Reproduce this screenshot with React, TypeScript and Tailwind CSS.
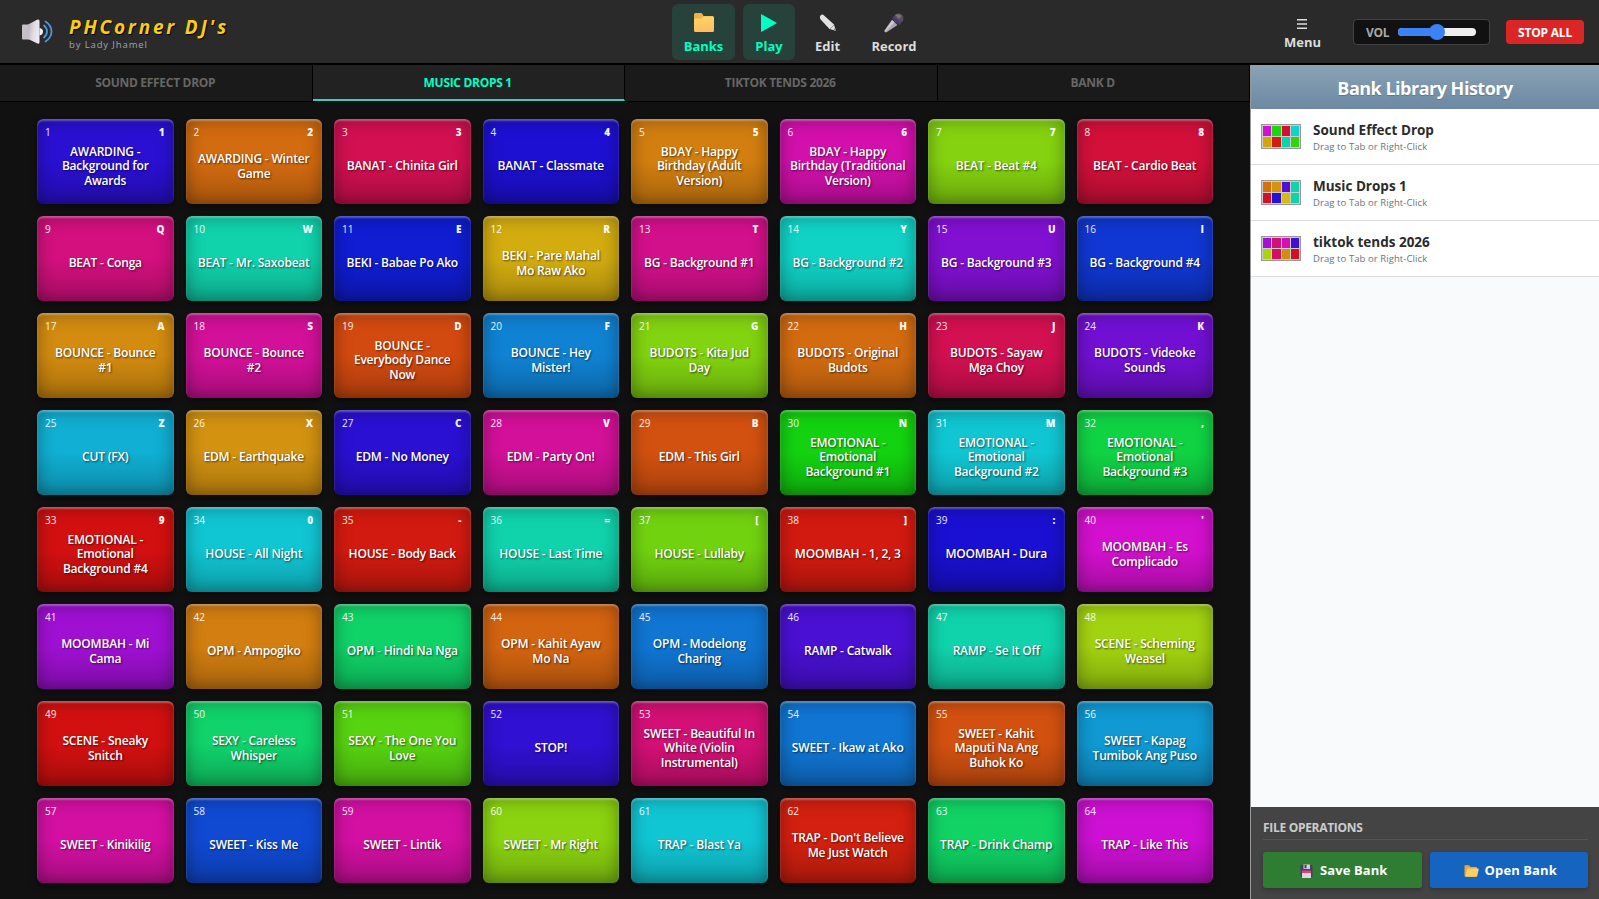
import React from "react";

type Pad = [label: string, key: string, hue: number];

const pads: Pad[] = [
  ["AWARDING -\nBackground for\nAwards", "1", 248],
  ["AWARDING - Winter\nGame", "2", 28],
  ["BANAT - Chinita Girl", "3", 340],
  ["BANAT - Classmate", "4", 244],
  ["BDAY - Happy\nBirthday (Adult\nVersion)", "5", 34],
  ["BDAY - Happy\nBirthday (Traditional\nVersion)", "6", 312],
  ["BEAT - Beat #4", "7", 84],
  ["BEAT - Cardio Beat", "8", 347],
  ["BEAT - Conga", "Q", 326],
  ["BEAT - Mr. Saxobeat", "W", 168],
  ["BEKI - Babae Po Ako", "E", 236],
  ["BEKI - Pare Mahal\nMo Raw Ako", "R", 48],
  ["BG - Background #1", "T", 322],
  ["BG - Background #2", "Y", 176],
  ["BG - Background #3", "U", 275],
  ["BG - Background #4", "I", 228],
  ["BOUNCE - Bounce\n#1", "A", 38],
  ["BOUNCE - Bounce\n#2", "S", 318],
  ["BOUNCE -\nEverybody Dance\nNow", "D", 18],
  ["BOUNCE - Hey\nMister!", "F", 205],
  ["BUDOTS - Kita Jud\nDay", "G", 85],
  ["BUDOTS - Original\nBudots", "H", 28],
  ["BUDOTS - Sayaw\nMga Choy", "J", 340],
  ["BUDOTS - Videoke\nSounds", "K", 270],
  ["CUT (FX)", "Z", 191],
  ["EDM - Earthquake", "X", 40],
  ["EDM - No Money", "C", 248],
  ["EDM - Party On!", "V", 318],
  ["EDM - This Girl", "B", 20],
  ["EMOTIONAL -\nEmotional\nBackground #1", "N", 119],
  ["EMOTIONAL -\nEmotional\nBackground #2", "M", 184],
  ["EMOTIONAL -\nEmotional\nBackground #3", ",", 136],
  ["EMOTIONAL -\nEmotional\nBackground #4", "9", 0],
  ["HOUSE - All Night", "0", 184],
  ["HOUSE - Body Back", "-", 3],
  ["HOUSE - Last Time", "=", 168],
  ["HOUSE - Lullaby", "[", 90],
  ["MOOMBAH - 1, 2, 3", "]", 3],
  ["MOOMBAH - Dura", ":", 243],
  ["MOOMBAH - Es\nComplicado", "'", 302],
  ["MOOMBAH - Mi\nCama", "", 284],
  ["OPM - Ampogiko", "", 34],
  ["OPM - Hindi Na Nga", "", 147],
  ["OPM - Kahit Ayaw\nMo Na", "", 26],
  ["OPM - Modelong\nCharing", "", 209],
  ["RAMP - Catwalk", "", 258],
  ["RAMP - Se It Off", "", 168],
  ["SCENE - Scheming\nWeasel", "", 75],
  ["SCENE - Sneaky\nSnitch", "", 0],
  ["SEXY - Careless\nWhisper", "", 148],
  ["SEXY - The One You\nLove", "", 98],
  ["STOP!", "", 250],
  ["SWEET - Beautiful In\nWhite (Violin\nInstrumental)", "", 329],
  ["SWEET - Ikaw at Ako", "", 209],
  ["SWEET - Kahit\nMaputi Na Ang\nBuhok Ko", "", 20],
  ["SWEET - Kapag\nTumibok Ang Puso", "", 198],
  ["SWEET - Kinikilig", "", 315],
  ["SWEET - Kiss Me", "", 222],
  ["SWEET - Lintik", "", 315],
  ["SWEET - Mr Right", "", 82],
  ["TRAP - Blast Ya", "", 184],
  ["TRAP - Don't Believe\nMe Just Watch", "", 5],
  ["TRAP - Drink Champ", "", 146],
  ["TRAP - Like This", "", 298],
];

const library = [
  { name: "Sound Effect Drop", hues: [299, 115, 350, 178, 46, 4, 168, 110] },
  { name: "Music Drops 1", hues: [30, 41, 260, 167, 352, 248, 53, 167] },
  { name: "tiktok tends 2026", hues: [286, 328, 310, 255, 72, 335, 38, 354] },
];

const tabs = ["SOUND EFFECT DROP", "MUSIC DROPS 1", "TIKTOK TENDS 2026", "BANK D"];

const tone = (h: number) => ({ backgroundColor: `hsl(${h}, 86%, 44.5%)` });

function Speaker() {
  return (
    <svg width="32" height="28" viewBox="0 0 32 28">
      <defs>
        <linearGradient id="cone" x1="0" y1="0" x2="1" y2="0.3">
          <stop offset="0" stopColor="#b5b0b8" />
          <stop offset="0.6" stopColor="#e2dce5" />
          <stop offset="1" stopColor="#efe8f2" />
        </linearGradient>
      </defs>
      <path d="M1 7.5 Q1 6.5 2 6.5 H8 V21.500 H2 Q1 21.500 1 20.500Z" fill="#c4c0c6" />
      <path d="M7 6.500 L16.500 1.500 Q18.500 1 18.500 3 V24 Q18.500 26.500 16.500 25.500 L7 21Z" fill="url(#cone)" />
      <path d="M18.500 10 Q22 10.500 22 13.500 Q22 17 18.500 17.500Z" fill="#f3edf5" />
      <g fill="none" stroke="#4d94dc" strokeLinecap="round" strokeWidth="1.800">
        <path d="M23 7.500 Q26 10 26 13.500 Q26 17 23 19.500" />
        <path d="M24.500 3.500 Q30.500 7.500 30.500 13.500 Q30.500 19.500 24.500 23.500" />
      </g>
    </svg>
  );
}

function Folder() {
  return (
    <svg width="20" height="19" viewBox="0 0 20 19">
      <defs>
        <linearGradient id="fold" x1="0" y1="0" x2="0" y2="1">
          <stop offset="0" stopColor="#ffd46b" />
          <stop offset="1" stopColor="#ffbc5c" />
        </linearGradient>
      </defs>
      <path d="M0 1.500 Q0 0 1.500 0 H7 Q8 0 8.500 1 L9.500 3 H18.500 Q20 3 20 4.500 V9 H0Z" fill="#efb045" />
      <path d="M0 7 Q0 5.500 1.500 5.500 H7.500 L9.500 3.500 H18.500 Q20 3.500 20 5 V17.500 Q20 19 18.500 19 H1.500 Q0 19 0 17.500Z" fill="url(#fold)" />
    </svg>
  );
}

function Pencil() {
  return (
    <svg width="18" height="18" viewBox="0 0 18 18">
      <path d="M1 3.500 Q0.500 2 2 1 Q3.500 0 4.800 1.200 L15 10.500 L16.800 16.800 L10.500 15 L1.200 5Z" fill="#e0e2e3" />
      <path d="M11 15 L15 11" stroke="#8d9093" strokeWidth="0.800" />
      <path d="M16.800 16.800 L14.200 16 L16 14Z" fill="#a98763" />
    </svg>
  );
}

function Mic() {
  return (
    <svg width="20" height="20" viewBox="0 0 20 20">
      <path d="M8 7 L13.500 12 L3 19 Q1.500 19.800 0.800 19 Q0 18.300 0.700 17Z" fill="#aaa5ad" />
      <path d="M8 7 L10.500 9.300 L1.800 18.800 L0.600 18.200Z" fill="#cbc7ce" />
      <circle cx="14.500" cy="5.500" r="5" fill="#574b5e" />
      <path d="M11 2 Q15 0 18 3 L15 6Z" fill="#80716f" />
      <path d="M9.500 5 L15.500 10.500" stroke="#443a75" strokeWidth="2.600" strokeLinecap="round" />
    </svg>
  );
}

function Floppy() {
  return (
    <svg width="13" height="14" viewBox="0 0 13 14">
      <path d="M0.500 1 H12.500 V13 H1.500 L0.500 12Z" fill="#493b70" />
      <rect x="3.500" y="0.500" width="6.500" height="4.500" fill="#d5cedb" />
      <rect x="4.500" y="1" width="2" height="3.300" fill="#493b70" />
      <rect x="2" y="6.500" width="9" height="2.700" fill="#e3436f" />
      <rect x="2" y="9" width="9" height="5" fill="#ddd6e2" />
    </svg>
  );
}

function OpenFolder() {
  return (
    <svg width="15" height="12" viewBox="0 0 15 12">
      <path d="M0.500 1 Q0.500 0.300 1.300 0.300 H5 L6.500 2 H12 Q13 2 13 3 V11.500 H1.500 Q0.500 11.500 0.500 10.500Z" fill="#eda940" />
      <path d="M4 3.600 H14 Q15 3.600 14.700 4.600 L13.200 11 Q13 11.700 12.200 11.700 H1.300 L3 4.400 Q3.200 3.600 4 3.600Z" fill="#ffcf62" />
    </svg>
  );
}

function NavButton({ label, active, className, children }: { label: string; active?: boolean; className: string; children: React.ReactNode }) {
  return (
    <button
      className={`flex h-[56px] flex-col items-center rounded-[6px] pt-[9px] text-[13px] leading-[18px] font-bold ${className} ${
        active ? "bg-[#26423b] text-[#00ffc3]" : "text-[#dddddd]"
      }`}
    >
      <span className="flex h-[20px] items-center justify-center">{children}</span>
      <span className="mt-[4px]">{label}</span>
    </button>
  );
}

function PadButton({ pad, index }: { pad: Pad; index: number }) {
  const [label, key, hue] = pad;
  return (
    <button
      style={tone(hue)}
      className="relative flex items-center justify-center rounded-[6px] bg-[linear-gradient(to_bottom,rgba(0,0,0,0)_50%,rgba(0,0,0,0.2))] pt-[10px] text-white shadow-[inset_0_2px_2px_rgba(255,255,255,0.3),inset_0_0_18px_rgba(0,0,0,0.38),0_4px_6px_rgba(0,0,0,0.4)]"
    >
      <span className="absolute top-[6px] left-[8px] text-[10px] leading-[14px] text-white/90">{index + 1}</span>
      <span className="absolute top-[6px] right-[9px] text-[10px] leading-[14px] font-extrabold text-white/95">{key}</span>
      <span className="text-center text-[12px] leading-[14.4px] font-semibold tracking-[-0.2px] whitespace-pre [text-shadow:1px_1px_2px_rgba(0,0,0,0.6)]">
        {label}
      </span>
    </button>
  );
}

export default function App() {
  return (
    <div className="flex h-[899px] w-[1599px] flex-col overflow-hidden bg-[#111111] font-['Open_Sans','Noto_Sans',sans-serif]">
      <header className="flex h-[65px] shrink-0 items-center border-b-2 border-black bg-[#2a2a2a]">
        <div className="flex w-[672px] items-center pl-[21px]">
          <Speaker />
          <div className="flex flex-col pt-[4px] pl-[16px]">
            <span className="text-[19px] leading-[22px] font-bold tracking-[2.8px] text-[#facc15] italic [text-shadow:1px_1px_1px_#000]">
              PHCorner DJ's
            </span>
            <span className="text-[9.500px] leading-[14px] tracking-[0.88px] text-[#a0a6ae]">by Lady Jhamel</span>
          </div>
        </div>
        <nav className="flex gap-[8px]">
          <NavButton label="Banks" active className="w-[63px]"><Folder /></NavButton>
          <NavButton label="Play" active className="w-[52px]">
            <svg width="16" height="18" viewBox="0 0 16 18"><path d="M0 0 L16 9 L0 18Z" fill="#00ffc3" /></svg>
          </NavButton>
          <NavButton label="Edit" className="w-[49px]"><Pencil /></NavButton>
          <NavButton label="Record" className="w-[68px]"><Mic /></NavButton>
        </nav>
        <div className="ml-auto flex items-center pr-[15px]">
          <button className="flex flex-col items-center pt-[6px] text-[13px] leading-[18px] font-bold text-[#dddddd]">
            <svg width="10" height="10" viewBox="0 0 10 10" className="mb-[4px]">
              <path d="M0 0.800 H10 M0 5 H10 M0 9.200 H10" stroke="#dddddd" strokeWidth="1.400" />
            </svg>
            Menu
          </button>
          <div className="ml-[32px] flex h-[26px] w-[137px] items-center rounded-[4px] border border-[#444444] bg-[#111111] pl-[12px]">
            <span className="w-[32px] pt-[2px] text-[12px] font-bold tracking-[-0.3px] text-[#aaaaaa]">VOL</span>
            <div className="flex h-[8px] w-[78px] items-center rounded-full bg-[#efefef]">
              <div className="h-[8px] w-[33px] rounded-l-full bg-[#3b82f6]" />
              <div className="-ml-[2px] size-[16px] rounded-full bg-[#3b82f6]" />
            </div>
          </div>
          <button className="ml-[16px] h-[24px] w-[78px] rounded-[4px] bg-[#dc2626] text-[12px] leading-[26px] font-bold tracking-[-0.2px] text-white">
            STOP ALL
          </button>
        </div>
      </header>

      <div className="flex min-h-0 flex-1">
        <main className="flex w-[1250px] shrink-0 flex-col">
          <div className="grid h-[37px] shrink-0 grid-cols-4 border-b border-black bg-[#1a1a1a]">
            {tabs.map((tab, i) => (
              <button
                key={tab}
                className={`h-[36px] border-r border-b-2 border-r-black pt-px pr-px text-[12px] leading-[34px] font-bold tracking-[-0.3px] ${
                  i === 1 ? "border-b-[#2dd4bf] bg-[#222222] text-[#00ffc3]" : "border-b-transparent text-[#666666]"
                }`}
              >
                {tab}
              </button>
            ))}
          </div>
          <div className="grid flex-1 grid-cols-8 grid-rows-8 gap-[12px] pt-[17px] pr-[37px] pb-[16px] pl-[37px]">
            {pads.map((pad, i) => (
              <PadButton key={i} pad={pad} index={i} />
            ))}
          </div>
        </main>

        <aside className="flex flex-1 flex-col border-l border-[#999999] bg-[#f9fafb]">
          <h2 className="flex h-[44px] shrink-0 items-center justify-center bg-linear-to-b from-[#8aa4b4] to-[#6c88a3] pt-[2px] text-[18px] font-bold tracking-[-0.5px] text-white [text-shadow:0_1px_1px_rgba(0,0,0,0.2)]">
            Bank Library History
          </h2>
          <ul>
            {library.map((bank) => (
              <li key={bank.name} className="flex h-[56px] items-center border-b border-[#dddddd] bg-white pl-[10px]">
                <div className="grid h-[25px] w-[40px] grid-cols-4 grid-rows-2 gap-px border border-[#999999] bg-[#cccccc] p-px">
                  {bank.hues.map((h, i) => (
                    <span key={i} style={tone(h)} />
                  ))}
                </div>
                <div className="flex flex-col pt-[2px] pl-[12px]">
                  <span className="text-[13.500px] leading-[18px] font-bold text-[#2b2b2b]">{bank.name}</span>
                  <span className="text-[9.500px] leading-[16px] tracking-[0.08px] text-[#6b7280]">Drag to Tab or Right-Click</span>
                </div>
              </li>
            ))}
          </ul>
          <footer className="mt-auto h-[92px] bg-[#444444] pt-[10px] pr-[11px] pl-[12px]">
            <h3 className="h-[23px] border-b border-[#555555] text-[12px] leading-[22px] font-bold tracking-[-0.3px] text-[#cccccc]">FILE OPERATIONS</h3>
            <div className="mt-[12px] flex gap-[8px] text-[13px] font-bold text-white">
              <button className="flex h-[36px] flex-1 items-center justify-center gap-[7px] rounded-[3px] bg-[#2e7d32] pt-px pl-[3px] shadow-[0_2px_4px_rgba(0,0,0,0.25)]">
                <Floppy />
                <span className="tracking-[0.1px]">Save Bank</span>
              </button>
              <button className="flex h-[36px] flex-1 items-center justify-center gap-[6px] rounded-[3px] bg-[#1565c0] pt-px pl-[3px] shadow-[0_2px_4px_rgba(0,0,0,0.25)]">
                <OpenFolder />
                <span className="tracking-[0.1px]">Open Bank</span>
              </button>
            </div>
          </footer>
        </aside>
      </div>
    </div>
  );
}
